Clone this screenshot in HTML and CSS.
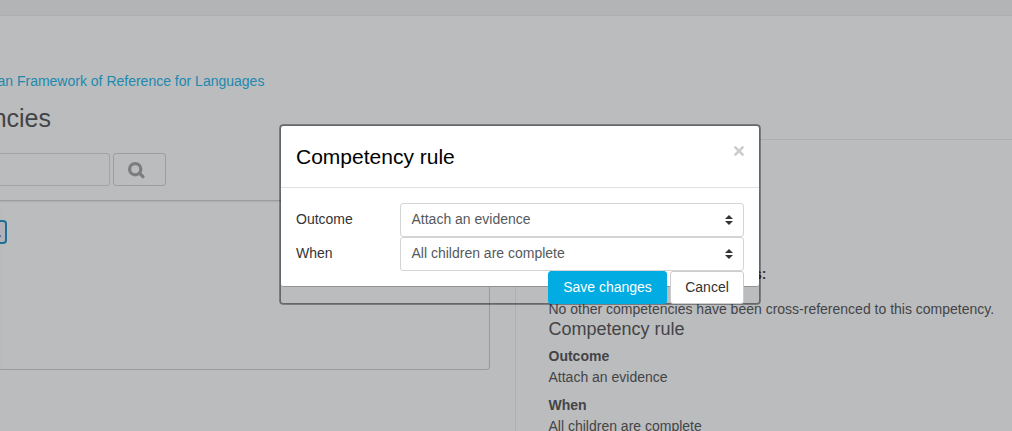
FILE: index.html
```html
<!DOCTYPE html>
<html lang="en">
<head>
    <meta charset="UTF-8">
    <meta name="viewport" content="width=device-width, initial-scale=1.0">
    <title>Competency rule</title>
    <link rel="stylesheet" href="styles.css">
</head>
<body>
    <div class="topbar"></div>
    <div class="page">
        <div class="breadcrumb"><a>European Framework of Reference for Languages</a></div>
        <div class="columns">
            <div class="tree-column">
                <h2>Competencies</h2>
                <div class="search">
                    <div class="search-input"></div>
                    <div class="search-btn">
                        <svg width="17" height="17" viewBox="0 0 17 17">
                            <circle cx="7.2" cy="7.2" r="5.6" fill="none" stroke="#7c7d7e" stroke-width="3.2"/>
                            <path d="M11.4 11.2L14.9 14.7" stroke="#7c7d7e" stroke-width="3.2" stroke-linecap="round"/>
                        </svg>
                    </div>
                </div>
                <div class="tree">
                    <div class="tree-node">.</div>
                </div>
            </div>
            <div class="detail-column">
                <strong class="cross-title">competencies:</strong>
                <p class="cross-text">No other competencies have been cross-referenced to this competency.</p>
                <h4>Competency rule</h4>
                <dl>
                    <dt>Outcome</dt>
                    <dd>Attach an evidence</dd>
                    <dt>When</dt>
                    <dd>All children are complete</dd>
                </dl>
            </div>
        </div>
    </div>

    <div class="dialogue">
        <div class="dialogue-content">
            <div class="dialogue-header">
                <h3>Competency rule</h3>
                <svg class="close" width="12" height="12" viewBox="0 0 12 12">
                    <path d="M1.6 1.6L10.4 10.4M10.4 1.6L1.6 10.4" stroke="#cccccc" stroke-width="2.6"/>
                </svg>
            </div>
            <div class="dialogue-body">
                <div class="form-row">
                    <label>Outcome</label>
                    <div class="select">
                        <span>Attach an evidence</span>
                        <svg width="8" height="10" viewBox="0 0 8 10">
                            <path d="M0 4L4 0L8 4ZM0 6L4 10L8 6Z" fill="#333333"/>
                        </svg>
                    </div>
                </div>
                <div class="form-row">
                    <label>When</label>
                    <div class="select">
                        <span>All children are complete</span>
                        <svg width="8" height="10" viewBox="0 0 8 10">
                            <path d="M0 4L4 0L8 4ZM0 6L4 10L8 6Z" fill="#333333"/>
                        </svg>
                    </div>
                </div>
                <div class="actions">
                    <button class="btn btn-primary">Save changes</button>
                    <button class="btn">Cancel</button>
                </div>
            </div>
        </div>
    </div>
</body>
</html>
```
FILE: styles.css
```css
* {
    box-sizing: border-box;
}
body {
    margin: 0;
    height: 431px;
    overflow: hidden;
    background-color: #bbbcbe;
    color: #434446;
    font-family: "Liberation Sans", Arial, sans-serif;
    font-size: 14px;
    line-height: 21px;
}
h2, h3, h4, p, dl, dd {
    margin: 0;
    font-weight: normal;
}
.topbar {
    height: 16px;
    background-color: #b3b4b6;
    border-bottom: 1px solid #adaeb0;
}
.breadcrumb {
    display: flex;
    justify-content: flex-end;
    width: 264.4px;
    margin-top: 55px;
    color: #2189ae;
    white-space: nowrap;
}
.columns {
    display: flex;
    align-items: flex-start;
}
.tree-column {
    width: 490px;
    padding-top: 11px;
}
.tree-column h2 {
    display: flex;
    justify-content: flex-end;
    width: 51px;
    font-size: 25px;
    line-height: 30px;
}
.search {
    display: flex;
    gap: 3px;
    margin-top: 20px;
}
.search-input {
    width: 110px;
    height: 33px;
    border: 1px solid #a3a4a6;
    border-left: 0;
    border-radius: 0 3px 3px 0;
}
.search-btn {
    width: 53px;
    height: 33px;
    padding: 8px 14px;
    border: 1px solid #9c9d9f;
    border-radius: 3px;
}
.search-btn svg {
    display: block;
}
.tree {
    height: 170px;
    margin-top: 14px;
    padding-top: 19px;
    border: 1px solid #9a9b9d;
    border-left: 0;
    border-radius: 0 4px 4px 0;
    box-shadow: inset 0 1px 1px #adaeb0;
}
.tree-node {
    width: 7px;
    height: 24px;
    border: 2px solid #1f7095;
    border-left: 0;
    border-radius: 0 4px 4px 0;
    background-color: #b1b2b9;
    color: #393a60;
    line-height: 20px;
    text-indent: -2px;
}
.detail-column {
    flex: 1;
    height: 292px;
    margin: 47px 0 0 25px;
    padding: 124px 0 0 32.5px;
    border-top: 1px solid #adaeb0;
    border-left: 1px solid #afb0b2;
    white-space: nowrap;
}
.cross-title {
    display: flex;
    justify-content: flex-end;
    width: 218px;
    color: #35363b;
}
.cross-text {
    margin-top: 14px;
}
.detail-column h4 {
    margin-top: -1px;
    font-size: 18px;
    line-height: 20px;
}
dl {
    margin-top: 7px;
}
dt {
    font-weight: bold;
}
dd {
    margin-bottom: 7px;
}
.dialogue {
    position: absolute;
    left: 279px;
    top: 124px;
    width: 482px;
    height: 181px;
    padding: 1px;
    border: 1px solid rgba(0, 0, 0, 0.34);
    border-radius: 4px;
    box-shadow: inset 0 0 0 1px rgba(0, 0, 0, 0.45);
    color: #333333;
}
.dialogue-content {
    height: 161px;
    border-bottom: 1px solid #919293;
    border-radius: 3px;
    background-color: #ffffff;
}
.dialogue-header {
    display: flex;
    justify-content: space-between;
    height: 62px;
    padding: 15px 14px 15px 15px;
    border-bottom: 1px solid #e0e0e0;
}
.dialogue-header h3 {
    color: #000000;
    font-size: 21px;
    line-height: 32px;
}
.close {
    margin-top: 4px;
}
.dialogue-body {
    padding: 15px;
}
.form-row {
    display: flex;
    height: 34px;
}
.form-row label {
    width: 104px;
    padding-top: 6px;
}
.select {
    display: flex;
    flex: 1;
    align-items: center;
    justify-content: space-between;
    padding: 0 10px 0 10.5px;
    border: 1px solid #d4d4d4;
    border-radius: 3px;
    color: #55595c;
}
.select span {
    margin-top: -1px;
}
.actions {
    display: flex;
    justify-content: flex-end;
    gap: 3px;
}
.btn {
    width: 74px;
    height: 33px;
    padding: 0 0 1px;
    border: 1px solid #cccccc;
    border-radius: 3px;
    background-color: #ffffff;
    color: #333333;
    font-family: inherit;
    font-size: 14px;
}
.btn-primary {
    width: 119px;
    border-color: #00ace1;
    background-color: #00ace1;
    color: #ffffff;
}
```
